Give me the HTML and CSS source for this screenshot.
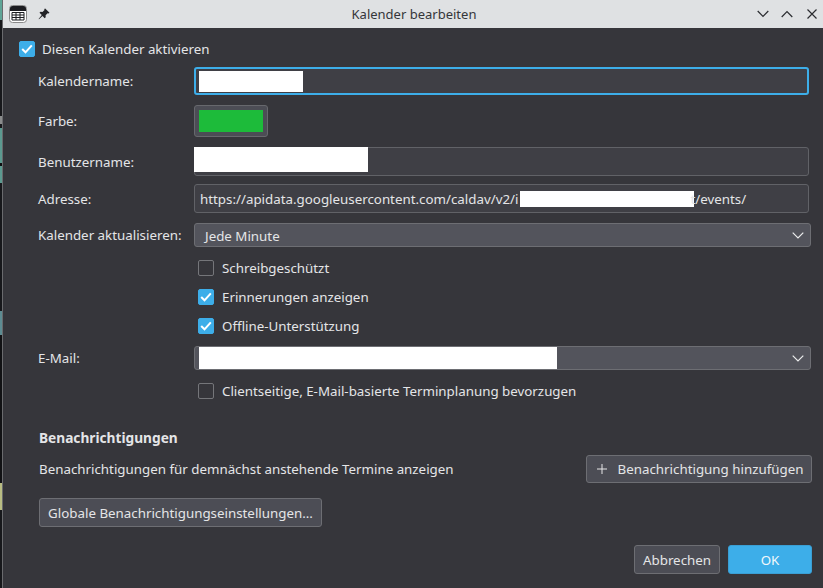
FILE: index.html
```html
<!DOCTYPE html>
<html lang="de">
<head>
<meta charset="utf-8">
<title>Kalender bearbeiten</title>
<link rel="stylesheet" href="styles.css">
</head>
<body>
<div class="desktop-strip"></div>
<div class="window">
  <header class="titlebar">
    <div class="title-left">
      <svg class="app-icon" width="18" height="18" viewBox="0 0 18 18">
        <rect x="0.5" y="0.5" width="17" height="17" rx="3" fill="#fff" stroke="#8a8a8a"/>
        <path d="M1 6V3.5A2.5 2.5 0 0 1 3.500 1h11A2.500 2.500 0 0 1 17 3.500V6z" fill="#1b1c20"/>
        <path d="M3 7.500h12v7.500H3z" fill="#fff" stroke="#1b1c20" stroke-width="1"/>
        <path d="M7 7.500v7.500M11 7.500v7.500M3 10h12M3 12.500h12" stroke="#1b1c20" stroke-width="1" fill="none"/>
      </svg>
      <svg class="pin-icon" width="12" height="12" viewBox="0 0 12 12">
        <path d="M7.200 0.500l4.300 4.300-1 .7-.9-.3-2 2 .1 2-1 1-2.200-2.300L1 11.200.6 10.900l3.200-3.800L1.500 4.800l1-1 2 .1 2-2-.3-.9z" fill="#232427"/>
      </svg>
    </div>
    <div class="title-text">Kalender bearbeiten</div>
    <div class="title-controls">
      <svg width="12" height="8" viewBox="0 0 12 8"><path d="M.700 1L6 6.500 11.300 1" fill="none" stroke="#2b2c30" stroke-width="1.200"/></svg>
      <svg width="12" height="8" viewBox="0 0 12 8"><path d="M.700 7L6 1.500 11.300 7" fill="none" stroke="#2b2c30" stroke-width="1.200"/></svg>
      <svg width="10" height="10" viewBox="0 0 10 10"><path d="M.500.500l9 9M9.500.500l-9 9" fill="none" stroke="#2b2c30" stroke-width="1.200"/></svg>
    </div>
  </header>

  <main class="content">
    <label class="check check-top">
      <span class="box on"><svg width="12" height="10" viewBox="0 0 12 10"><path d="M1.200 5l3.300 3.300 6.300-7" fill="none" stroke="#fff" stroke-width="2"/></svg></span>
      Diesen Kalender aktivieren
    </label>

    <div class="form">
      <div class="label row-name">Kalendername:</div>
      <div class="field input focus row-name"><span class="mask mask-name"></span></div>

      <div class="label row-color">Farbe:</div>
      <div class="row-color"><div class="color-button"><span class="swatch"></span></div></div>

      <div class="label row-user">Benutzername:</div>
      <div class="field input row-user flush"><span class="mask mask-user"></span></div>

      <div class="label row-addr">Adresse:</div>
      <div class="field input row-addr">https://apidata.googleusercontent.com/caldav/v2/i<span class="mask mask-addr"></span>t/events/</div>

      <div class="label row-update">Kalender aktualisieren:</div>
      <div class="combo row-update">
        <span class="combo-text">Jede Minute</span>
        <svg class="chevron" width="12" height="7" viewBox="0 0 12 7"><path d="M.700 .700L6 6l5.300-5.300" fill="none" stroke="#eceded" stroke-width="1.200"/></svg>
      </div>

      <div class="checks">
        <label class="check"><span class="box"></span>Schreibgeschützt</label>
        <label class="check"><span class="box on"><svg width="12" height="10" viewBox="0 0 12 10"><path d="M1.200 5l3.300 3.300 6.300-7" fill="none" stroke="#fff" stroke-width="2"/></svg></span>Erinnerungen anzeigen</label>
        <label class="check"><span class="box on"><svg width="12" height="10" viewBox="0 0 12 10"><path d="M1.200 5l3.300 3.300 6.300-7" fill="none" stroke="#fff" stroke-width="2"/></svg></span>Offline-Unterstützung</label>
      </div>

      <div class="label row-mail">E-Mail:</div>
      <div class="combo row-mail combo-mail">
        <span class="mask mask-mail"></span>
        <svg class="chevron" width="12" height="7" viewBox="0 0 12 7"><path d="M.700 .700L6 6l5.300-5.300" fill="none" stroke="#eceded" stroke-width="1.200"/></svg>
      </div>

      <div class="checks checks-last">
        <label class="check"><span class="box"></span>Clientseitige, E-Mail-basierte Terminplanung bevorzugen</label>
      </div>
    </div>

    <section class="notify">
      <h2 class="heading">Benachrichtigungen</h2>
      <div class="notify-row">
        <span>Benachrichtigungen für demnächst anstehende Termine anzeigen</span>
        <button class="btn btn-add" type="button">
          <svg width="10" height="10" viewBox="0 0 10 10"><path d="M5 0v10M0 5h10" stroke="#e6e7e8" stroke-width="1" fill="none"/></svg>
          Benachrichtigung hinzufügen
        </button>
      </div>
      <button class="btn btn-global" type="button">Globale Benachrichtigungseinstellungen...</button>
    </section>

    <footer class="actions">
      <button class="btn btn-cancel" type="button">Abbrechen</button>
      <button class="btn btn-ok" type="button">OK</button>
    </footer>
  </main>
</div>
</body>
</html>
```

FILE: styles.css
```css
* { box-sizing: border-box; }
html, body { margin: 0; height: 100%; overflow: hidden; }
body {
  display: flex;
  width: 823px;
  height: 588px;
  font-family: "Noto Sans", sans-serif;
  font-size: 13.333px;
  line-height: 18px;
  color: #e4e5e7;
  background: #36363b;
}
.desktop-strip {
  flex: 0 0 3px;
  border-right: 1px solid #6a6b6e;
  background: linear-gradient(to bottom,
    #5fa597 0, #5fa597 20px, #17181b 20px, #17181b 116px,
    #8a8c8c 116px, #8a8c8c 124px, #17181b 124px, #17181b 128px,
    #5c9a90 128px, #5c9a90 163px, #0d0e10 163px, #0d0e10 166px,
    #5c9a90 166px, #5c9a90 183px, #17181b 183px, #17181b 311px,
    #5d8c92 311px, #5d8c92 335px, #111214 335px, #111214 483px,
    #b9bd83 483px, #b9bd83 510px, #17181b 510px, #17181b 588px);
}
.window { flex: 1; display: flex; flex-direction: column; min-width: 0; }

.titlebar {
  flex: 0 0 28px;
  display: grid;
  grid-template-columns: 1fr auto 1fr;
  align-items: center;
  background: #dfe1e3;
  color: #35363a;
  padding: 0 6px;
}
.title-left { display: flex; align-items: center; gap: 11px; }
.title-text { font-size: 13px; padding-left: 2px; }
.title-controls { display: flex; align-items: center; justify-content: flex-end; gap: 12px; }
.title-controls svg:last-child { margin-left: 2px; }

.content { flex: 1; display: flex; flex-direction: column; padding: 12px 11px 14px 16px; }

.check { display: flex; align-items: center; gap: 8px; height: 18px; }
.check-top { gap: 7px; }
.box {
  flex: 0 0 16px;
  width: 16px;
  height: 16px;
  border: 1px solid #75767a;
  border-radius: 2px;
  display: flex;
  align-items: center;
  justify-content: center;
}
.box.on { background: #3daee9; border-color: #3daee9; }

.form {
  display: grid;
  grid-template-columns: 156px 1fr;
  margin: 9px 1px 0 19px;
  align-items: center;
}
.label { grid-column: 1; }
.field, .combo, .row-color:not(.label), .checks { grid-column: 2; }

.input {
  height: 29px;
  margin-right: 2px;
  display: flex;
  align-items: center;
  padding: 0 5px;
  background: #3f3f45;
  border: 1px solid #616267;
  border-radius: 3px;
  white-space: nowrap;
}
.focus { height: 28px; border: 2px solid #3daee9; padding: 0 3px; }
.flush { padding: 0; align-items: flex-start; }

.mask { display: block; flex: none; background: #fff; }
.mask-name { width: 104px; height: 21px; }
.mask-user { width: 174px; height: 25px; margin: -1px 0 0 -1px; }
.mask-addr { width: 174px; height: 16px; margin: 0 -4px 0 2px; }
.mask-mail { width: 358px; height: 22px; }

.color-button {
  width: 74px;
  height: 32px;
  padding: 4px;
  background: #4c4d55;
  border: 1px solid #67686d;
  border-radius: 3px;
}
.swatch { display: block; height: 100%; background: #1dbb3a; }

.row-color { margin-top: 10px; }
.row-user { margin-top: 10px; }
.row-addr { margin-top: 8px; }
.row-update { margin-top: 10px; }

.combo {
  height: 24px;
  display: flex;
  align-items: center;
  justify-content: space-between;
  padding: 0 6px 0 10px;
  background: #53545c;
  border: 1px solid #6d6e73;
  border-radius: 3px;
}
.combo-mail { padding-left: 4px; align-items: flex-start; }
.combo-mail .chevron { align-self: center; }
.combo-text { padding-top: 2px; }

.checks { display: flex; flex-direction: column; gap: 11px; padding: 12px 0 0 4px; }
.row-mail { margin-top: 11px; }
.checks-last { padding-top: 12px; }

.notify { margin: 29px 0 0 20px; }
.heading { margin: 0; font-size: 13.700px; line-height: 18px; font-weight: 700; }
.notify-row {
  display: flex;
  align-items: center;
  justify-content: space-between;
  margin-top: 8px;
}

.btn {
  font: inherit;
  color: inherit;
  height: 29px;
  padding: 0 8px;
  background: #4c4d55;
  border: 1px solid #6d6e73;
  border-radius: 3px;
  display: inline-flex;
  align-items: center;
  justify-content: center;
  white-space: nowrap;
}
.btn-add { width: 226px; height: 28px; gap: 11px; padding: 0 6px 0 8px; }
.btn-global { width: 283px; margin-top: 15px; }

.actions { margin-top: auto; display: flex; justify-content: flex-end; gap: 8px; }
.btn-cancel { width: 86px; }
.btn-ok { width: 84px; background: #3daee9; border-color: #3a9fd4; color: #f2f8fb; }
```
